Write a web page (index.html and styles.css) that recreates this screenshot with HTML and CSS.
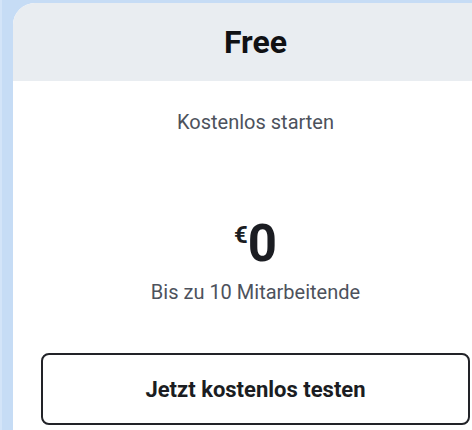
FILE: index.html
```html
<!DOCTYPE html>
<html lang="de">
<head>
<meta charset="utf-8">
<link rel="stylesheet" href="styles.css">
</head>
<body>
<div class="page">
  <div class="card">
    <div class="card-header"><h2 class="plan-name">Free</h2></div>
    <div class="card-body">
      <p class="tagline">Kostenlos starten</p>
      <div class="price"><span class="currency">€</span><span class="amount">0</span></div>
      <p class="limit">Bis zu 10 Mitarbeitende</p>
      <button class="cta">Jetzt kostenlos testen</button>
    </div>
  </div>
</div>
</body>
</html>
```
FILE: styles.css
```css
html, body {
  margin: 0;
  padding: 0;
  height: 100%;
  overflow: hidden;
}
body {
  background: #c6dcf5;
  font-family: Roboto, "Liberation Sans", Arial, sans-serif;
}
.page {
  height: 100%;
  border-left: 2px solid #d3e4f8;
  padding: 3px 0 0 11px;
  box-sizing: border-box;
}
.card {
  width: 485px;
  height: 500px;
  background: #ffffff;
  border-radius: 22px 22px 0 0;
  overflow: hidden;
}
.card-header {
  height: 78px;
  background: #e9edf1;
  display: flex;
  align-items: center;
  justify-content: center;
}
.plan-name {
  margin: 0;
  font-size: 32px;
  font-weight: 700;
  line-height: 40px;
  color: #101114;
}
.card-body {
  padding: 0 28px;
  display: flex;
  flex-direction: column;
  align-items: stretch;
  text-align: center;
}
.tagline {
  margin: 28px 0 0;
  font-size: 20px;
  line-height: 26px;
  color: #4d525c;
}
.price {
  margin-top: 85px;
  height: 48px;
  display: flex;
  justify-content: center;
  align-items: flex-start;
  color: #1b1d22;
  font-weight: 700;
}
.currency {
  font-size: 24px;
  line-height: 24px;
  margin-top: 3px;
}
.amount {
  font-size: 51px;
  line-height: 48px;
}
.limit {
  margin: 11px 0 0;
  font-size: 20px;
  line-height: 26px;
  color: #4d525c;
}
.cta {
  margin-top: 48px;
  height: 72px;
  border: 2px solid #222328;
  border-radius: 8px;
  background: #ffffff;
  font-family: inherit;
  font-size: 22px;
  font-weight: 700;
  color: #1b1d22;
}
```
